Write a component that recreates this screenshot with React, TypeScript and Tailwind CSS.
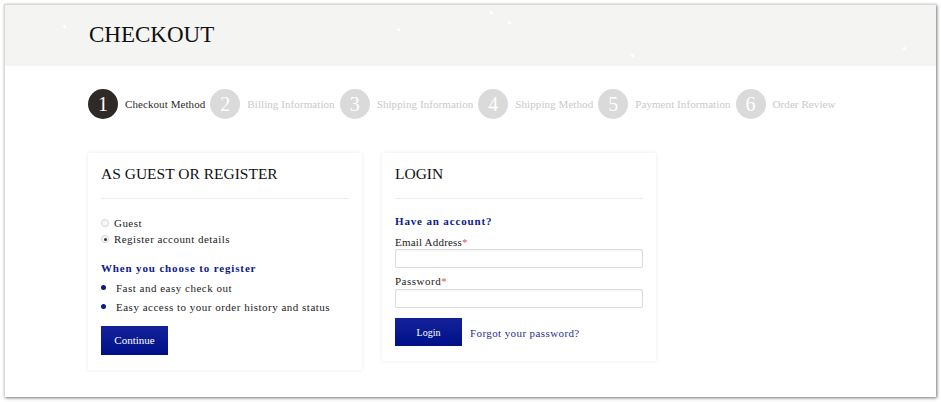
import React from "react";

const serif = { fontFamily: '"Liberation Serif", "Times New Roman", serif' };

function Steps() {
  const steps = [
    "Checkout Method",
    "Billing Information",
    "Shipping Information",
    "Shipping Method",
    "Payment Information",
    "Order Review",
  ];
  return (
    <div className="flex items-center">
      {steps.map((s, i) => (
        <div key={s} className="flex items-center">
          <div
            className={
              i === 0
                ? "w-[30px] h-[30px] rounded-full bg-[#2f2a27] text-white flex items-center justify-center text-[20px] leading-none"
                : "w-[30px] h-[30px] rounded-full bg-[#dadada] text-white flex items-center justify-center text-[20px] leading-none"
            }
          >
            {i + 1}
          </div>
          <span
            className={
              i === 0
                ? "ml-[7px] mr-[5px] text-[11px] tracking-[0.08px] text-[#2b2b2b]"
                : "ml-[7px] mr-[5px] text-[11px] tracking-[0.08px] text-[#c9c9c9]"
            }
          >
            {s}
          </span>
        </div>
      ))}
    </div>
  );
}

function Radio({ checked, label }: { checked?: boolean; label: string }) {
  return (
    <div className="flex items-center h-[16px]">
      <span className="w-[8px] h-[8px] rounded-full border border-[#d4d4d4] bg-[#f7f7f7] flex items-center justify-center">
        {checked && <span className="w-[3px] h-[3px] rounded-full bg-[#333]" />}
      </span>
      <span className="ml-[5px] text-[11px] tracking-[0.45px] text-[#222]">{label}</span>
    </div>
  );
}

function Card({ title, children, className }: { title: string; children: React.ReactNode; className?: string }) {
  return (
    <div className={"w-[274px] bg-white shadow-[0_0_4px_rgba(0,0,0,0.09)] px-[13px] pt-[11px] " + (className ?? "")}>
      <div className="text-[15.5px] leading-[20px] text-[#111] pb-[14px] border-b border-[#ececec]">{title}</div>
      {children}
    </div>
  );
}

export default function App() {
  const dots = [
    [63, 25],
    [397, 28],
    [490, 11],
    [508, 21],
    [631, 54],
    [903, 47],
  ];
  return (
    <div className="w-[941px] h-[402px] bg-white pt-[4px] pl-[4px]" style={serif}>
      <div className="w-[932px] h-[393px] bg-white shadow-[1px_1px_3px_rgba(0,0,0,0.55)] border-l border-t border-[#d8d8d8]">
        <div className="relative h-[61px] bg-[#f4f4f2] pl-[84px] pt-[16px]">
          <h1 className="text-[23px] leading-[28px] text-[#111]">CHECKOUT</h1>
          {dots.map(([x, y]) => (
            <span
              key={x}
              className="absolute w-[3px] h-[3px] rounded-full bg-white"
              style={{ left: x - 5, top: y - 5 }}
            />
          ))}
        </div>
        <div className="pl-[83px] pt-[23px]">
          <Steps />
          <div className="flex items-start gap-[20px] mt-[34px]">
            <Card title="AS GUEST OR REGISTER" className="pb-[15px]">
              <div className="pt-[16px]">
                <Radio label="Guest" />
                <Radio label="Register account details" checked />
              </div>
              <div className="mt-[13px] text-[11px] font-bold tracking-[0.85px] text-[#0b1a8c] leading-[16px]">
                When you choose to register
              </div>
              <ul className="mt-[3px]">
                <li className="flex items-center h-[19px] text-[11px] tracking-[0.5px] text-[#222]">
                  <span className="w-[5px] h-[5px] rounded-full bg-[#0b1a8c] mr-[10px] -mt-[3px]" />
                  Fast and easy check out
                </li>
                <li className="flex items-center h-[19px] text-[11px] tracking-[0.5px] text-[#222]">
                  <span className="w-[5px] h-[5px] rounded-full bg-[#0b1a8c] mr-[10px] -mt-[3px]" />
                  Easy access to your order history and status
                </li>
              </ul>
              <button className="mt-[9px] w-[67px] h-[29px] bg-gradient-to-b from-[#14229a] to-[#000f88] text-white text-[11px]">
                Continue
              </button>
            </Card>
            <Card title="LOGIN" className="pb-[15px]">
              <div className="pt-[14px] text-[11px] font-bold tracking-[0.85px] text-[#0b1a8c] leading-[16px]">
                Have an account?
              </div>
              <label className="block mt-[6px] text-[11px] tracking-[0.2px] text-[#222] leading-[14px]">
                Email Address<span className="text-[#e2574c]">*</span>
              </label>
              <input className="block w-[248px] h-[19px] border border-[#dcdcdc] rounded-[2px] shadow-[inset_0_1px_2px_rgba(0,0,0,0.05)]" />
              <label className="block mt-[6px] text-[11px] tracking-[0.5px] text-[#222] leading-[14px]">
                Password<span className="text-[#e2574c]">*</span>
              </label>
              <input
                type="password"
                className="block mt-[1px] w-[248px] h-[19px] border border-[#dcdcdc] rounded-[2px] shadow-[inset_0_1px_2px_rgba(0,0,0,0.05)]"
              />
              <div className="flex items-center mt-[10px]">
                <button className="w-[67px] h-[28px] bg-gradient-to-b from-[#14229a] to-[#000f88] text-white text-[10px]">
                  Login
                </button>
                <a className="ml-[8px] mt-[3px] text-[11px] tracking-[0.4px] text-[#1f2f95]">Forgot your password?</a>
              </div>
            </Card>
          </div>
        </div>
      </div>
    </div>
  );
}
